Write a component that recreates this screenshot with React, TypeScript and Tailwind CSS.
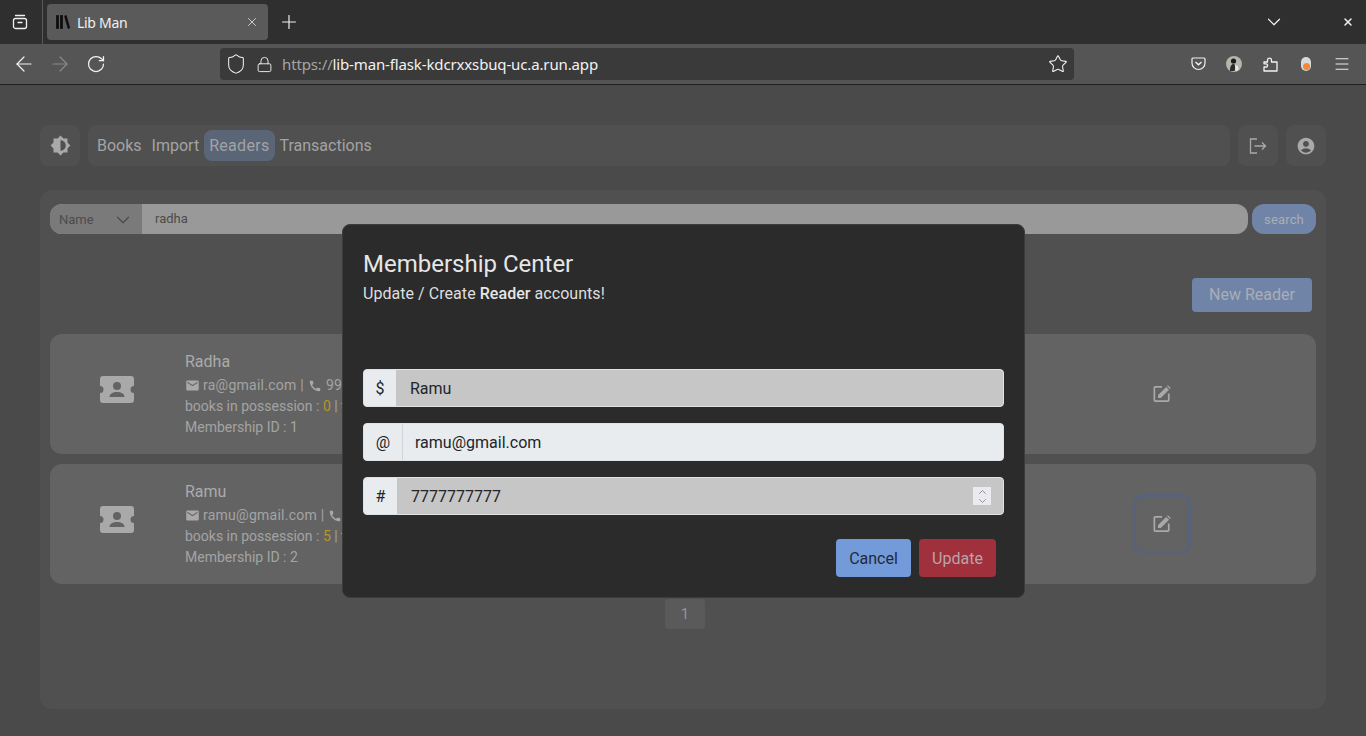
import React from 'react';
import { ArrowLeft, ArrowRight, ChevronDown, ChevronUp, Lock, Menu, Plus, RotateCw, Shield, Star, X } from 'lucide-react';
import { MdAccountCircle, MdBrightnessMedium, MdCall, MdEmail } from 'react-icons/md';

function TicketIcon() {
  return (
    <svg width="34" height="27" viewBox="0 0 34 27" className="text-[#a9a9a9]">
      <path
        fill="currentColor"
        d="M3 0h28a3 3 0 0 1 3 3v7a3.500 3.500 0 0 0 0 7v7a3 3 0 0 1-3 3H3a3 3 0 0 1-3-3v-7a3.500 3.500 0 0 0 0-7V3a3 3 0 0 1 3-3z"
      />
      <circle cx="17" cy="10" r="4" fill="#636363" />
      <path fill="#636363" d="M9.500 21c0-3.500 3.500-5 7.500-5s7.500 1.500 7.500 5z" />
    </svg>
  );
}

function EditIcon() {
  return (
    <svg width="18" height="18" viewBox="0 0 20 20" className="text-[#a9a9a9]">
      <path fill="none" stroke="currentColor" strokeWidth="1.900" d="M10 2H2.500a1 1 0 0 0-1 1v14a1 1 0 0 0 1 1h14a1 1 0 0 0 1-1V9.500" />
      <path fill="currentColor" d="M5.500 14.500v-3.200L14.600 2.200l3.200 3.200-9.100 9.100zM15.600 1.200l1-1 3.200 3.200-1 1z" />
    </svg>
  );
}

function ReaderCard({ name, email, phone, books, id, focused }: { name: string; email: string; phone: string; books: number; id: number; focused?: boolean }) {
  return (
    <div className="h-[120px] rounded-xl bg-[#636363] flex items-center">
      <div className="w-[134px] mr-[1px] flex justify-center pb-[10px]">
        <TicketIcon />
      </div>
      <div className="flex-1 text-[14px] leading-[21px] text-[#a3a3a3] pb-[1px]">
        <div className="text-[16px] leading-[26px] text-[#ababab]">{name}</div>
        <div className="flex items-center tracking-[0.25px]">
          <MdEmail className="text-[15px] mr-[3px] text-[#a9a9a9]" />
          <span>{email} | </span>
          <MdCall className="text-[14px] mx-[4px] text-[#a9a9a9]" />
          <span>{phone}</span>
        </div>
        <div>
          books in possession : <span className="text-[#b8942a]">{books}</span> | total transactions
        </div>
        <div>Membership ID : {id}</div>
      </div>
      <div className={`w-[58px] h-[60px] mr-[125px] flex items-center justify-center rounded-[10px] border-[3px] ${focused ? 'border-[#56637a]' : 'border-transparent'}`}>
        <EditIcon />
      </div>
    </div>
  );
}

function InputRow({ prefix, prefixWidth, value, filled, spinner }: { prefix: string; prefixWidth: string; value: string; filled?: boolean; spinner?: boolean }) {
  return (
    <div className={`h-[38px] flex rounded overflow-hidden text-[16px] text-[#212529] border border-[#dee2e6] ${filled ? 'bg-[#c6c6c6]' : 'bg-[#e9ecef]'}`}>
      <div className={`${prefixWidth} pt-[1px] bg-[#e9ecef] flex items-center justify-center shrink-0 ${filled ? '' : 'border-r border-[#ced4da]'}`}>{prefix}</div>
      <input readOnly value={value} className={`flex-1 min-w-0 pt-[1px] bg-transparent outline-none ${filled ? 'pl-[14px]' : 'pl-[12px]'}`} />
      {spinner && (
        <div className="w-[18px] h-[18px] my-auto mr-[12px] bg-[#eaeaf0] flex flex-col items-center justify-center text-[#8a8a94]">
          <ChevronUp size={13} strokeWidth={1.800} className="-my-[1.5px]" />
          <ChevronDown size={13} strokeWidth={1.800} className="-my-[1.5px]" />
        </div>
      )}
    </div>
  );
}

export default function App() {
  return (
    <div className="relative w-[1366px] h-[736px] overflow-hidden bg-[#4a4a4a] font-['Roboto',sans-serif]">
      {/* Browser tabs */}
      <div className="h-[44px] bg-[#2f2f2f] flex items-center text-[#f0f0f0]">
        <div className="w-[43px] h-[44px] border-r border-[#5a5a5a] flex items-center pl-[12px]">
          <svg width="16" height="16" viewBox="0 0 16 16" fill="none" stroke="currentColor" strokeWidth="1.300">
            <rect x="1.500" y="4.500" width="13" height="10" rx="2" />
            <path d="M3.500 1.500h9M6 8.500h4" strokeLinecap="round" />
          </svg>
        </div>
        <div className="ml-[4px] w-[221px] h-[36px] rounded bg-[#5a5a5a] flex items-center pl-[8px] pr-[9px] font-['Noto_Sans',sans-serif] text-[14px]">
          <svg width="16" height="16" viewBox="0 0 16 16" fill="#0c0c0c" stroke="#777" strokeWidth="0.200" className="mr-[6px]">
            <rect x="1" y="1" width="3" height="14" />
            <rect x="5" y="1" width="3" height="14" />
            <path d="M9 1.800l2.600-.7 3.700 13.200-2.600.7z" />
          </svg>
          <span className="flex-1 tracking-[-0.3px]">Lib Man</span>
          <X size={14} strokeWidth={1.300} />
        </div>
        <Plus size={22} strokeWidth={1.300} className="ml-[10px]" />
        <div className="flex-1" />
        <ChevronDown size={22} strokeWidth={1.300} className="mr-[57px]" />
        <X size={12} strokeWidth={3} className="mr-[12px]" />
      </div>

      {/* Browser toolbar */}
      <div className="h-[41px] bg-[#555555] border-b border-[#1f1f1f] flex items-center text-[#f2f2f2]">
        <ArrowLeft size={24} strokeWidth={1.200} className="ml-[12px]" />
        <ArrowRight size={24} strokeWidth={1.200} className="ml-[12px] text-[#8a8a8a]" />
        <RotateCw size={20} strokeWidth={1.500} className="ml-[14px]" />
        <div className="ml-[114px] w-[854px] h-[32px] rounded bg-[#3a3a3a] flex items-center pl-[5px] pr-[6px] font-['Noto_Sans',sans-serif] text-[15px]">
          <Shield size={22} strokeWidth={1.100} />
          <Lock size={17} strokeWidth={1.300} className="ml-[9px]" />
          <span className="ml-[9px] flex-1 tracking-[-0.14px]">
            <span className="text-[#a5a5a5]">https://</span>lib-man-flask-kdcrxxsbuq-uc.a.run.app
          </span>
          <Star size={20} strokeWidth={1.300} />
        </div>
        <svg width="15" height="14" viewBox="0 0 15 14" fill="none" stroke="currentColor" strokeWidth="1.200" className="ml-[117px]">
          <path d="M2 1h11a1 1 0 0 1 1 1v4a6.500 6.500 0 0 1-13 0V2a1 1 0 0 1 1-1z" />
          <path d="M4.500 5l3 2.800 3-2.800" strokeWidth="1.500" />
        </svg>
        <svg width="16" height="16" viewBox="0 0 16 16" className="ml-[20px]">
          <circle cx="8" cy="8" r="8" fill="#b5b5ad" />
          <circle cx="7.500" cy="5" r="2.600" fill="#1c1c1c" />
          <path d="M4 15c0-5 1.500-7 3.500-7s2 4 1 7z" fill="#2a2a2a" />
          <path d="M9 9l3 1 .5 4-3 1z" fill="#e8e8e8" />
        </svg>
        <svg width="15" height="16" viewBox="0 0 15 16" fill="none" stroke="currentColor" strokeWidth="1.300" className="ml-[21px]">
          <path d="M1 6h3.500V4.200a2 2 0 1 1 4 0V6H14v9H1v-4h2a1.600 1.600 0 0 0 0-3.200H1z" strokeLinejoin="round" />
        </svg>
        <div className="ml-[23px] w-[10px] h-[14px] rounded-full bg-[#d9d9d9] flex items-end justify-center">
          <div className="w-[7px] h-[7px] mb-[1px] rounded-full bg-[#f0883e]" />
        </div>
        <Menu size={18} strokeWidth={1.300} className="ml-[22px]" />
      </div>

      {/* Page */}
      <div className="px-[40px] pt-[40px] text-[#a3a3a3]">
        <div className="h-[41px] flex gap-[8px]">
          <div className="w-[40px] rounded-lg bg-[#505050] flex items-center justify-center">
            <MdBrightnessMedium className="text-[21px] text-[#a9a9a9]" />
          </div>
          <div className="flex-1 rounded-lg bg-[#505050] flex items-center pl-[4px] text-[16px]">
            <span className="px-[5px]">Books</span>
            <span className="px-[5px]">Import</span>
            <span className="pl-[5px] pr-[6px] h-[31px] flex items-center rounded-lg bg-[#5a6578] tracking-[0.3px]">Readers</span>
            <span className="pl-[4px] pr-[5px]">Transactions</span>
          </div>
          <div className="w-[40px] rounded-lg bg-[#505050] flex items-center justify-center text-[#a9a9a9]">
            <svg width="18" height="16" viewBox="0 0 18 16" fill="none" stroke="currentColor" strokeWidth="1.300">
              <path d="M8 1H1.500v14H8M5.500 8H16.500M13 4.500 16.500 8 13 11.500" />
            </svg>
          </div>
          <div className="w-[40px] rounded-lg bg-[#505050] flex items-center justify-center">
            <MdAccountCircle className="text-[20px] text-[#a9a9a9]" />
          </div>
        </div>

        <div className="mt-[24px] h-[519px] rounded-xl bg-[#505050] px-[10px] pt-[14px]">
          <div className="h-[30px] flex gap-[4px] text-[13px]">
            <div className="flex-1 flex rounded-xl overflow-hidden bg-[#999999] text-[#4c4c4c]">
              <div className="w-[92px] bg-[#7a7a7a] flex items-center pl-[9px] pr-[8px] pt-[1px] justify-between">
                <span>Name</span>
                <ChevronDown size={22} strokeWidth={1.400} />
              </div>
              <div className="flex items-center pl-[13px]">radha</div>
            </div>
            <button className="w-[64px] pt-[1px] rounded-xl bg-[#7084a8] text-[#a9aeb6] tracking-[0.15px]">search</button>
          </div>

          <div className="mt-[44px] flex justify-end pr-[4px]">
            <button className="w-[120px] h-[34px] rounded bg-[#7084a8] text-[16px] text-[#a9aeb6]">New Reader</button>
          </div>

          <div className="mt-[22px] flex flex-col gap-[10px]">
            <ReaderCard name="Radha" email="ra@gmail.com" phone="9999999999" books={0} id={1} />
            <ReaderCard name="Ramu" email="ramu@gmail.com" phone="7777777777" books={5} id={2} focused />
          </div>

          <div className="mt-[15px] pl-[4px] flex justify-center">
            <div className="w-[40px] h-[30px] rounded bg-[#5a5a5a] flex items-center justify-center text-[14px] text-[#969696]">1</div>
          </div>
        </div>
      </div>

      {/* Modal */}
      <div className="absolute left-[342px] top-[224px] w-[683px] h-[374px] rounded-lg bg-[#2b2b2b] border border-[#3c3c3c] px-[20px] pt-[21px] text-[#e6e6e6]">
        <div className="text-[24px] leading-[36px]">Membership Center</div>
        <div className="text-[16px] leading-[22px] mt-[1px] tracking-[0.05px] text-[#dedede]">
          Update / Create <span className="font-medium text-[#e6e6e6]">Reader</span> accounts!
        </div>
        <div className="mt-[64px] flex flex-col gap-[16px]">
          <InputRow prefix="$" prefixWidth="w-[32px]" value="Ramu" filled />
          <InputRow prefix="@" prefixWidth="w-[39px]" value="ramu@gmail.com" />
          <InputRow prefix="#" prefixWidth="w-[33px]" value="7777777777" filled spinner />
        </div>
        <div className="mt-[24px] flex justify-end gap-[8px] pr-[8px] text-[16px]">
          <button className="w-[75px] h-[38px] pt-[1px] rounded bg-[#739ad9] text-[#1f2a3d]">Cancel</button>
          <button className="w-[77px] h-[38px] pt-[1px] rounded bg-[#a0303c] text-[#b8a4a8]">Update</button>
        </div>
      </div>
    </div>
  );
}
